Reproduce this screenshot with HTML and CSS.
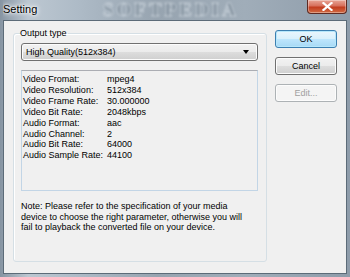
FILE: index.html
```html
<!DOCTYPE html>
<html lang="en">
<head>
  <meta charset="UTF-8" />
  <title>Setting</title>
  <link rel="stylesheet" href="styles.css">
</head>
<body>
  <div class="window">
    <div class="titlebar">
      <span class="watermark">SOFTPEDIA</span>
      <span class="title">Setting</span>
      <button class="close" title="Close">
        <svg width="11" height="9" viewBox="0 0 11 9">
          <path d="M1.5 1 L9.5 8 M9.5 1 L1.5 8" stroke="#fff" stroke-width="2.2" stroke-linecap="square"/>
        </svg>
      </button>
    </div>

    <div class="client">
      <fieldset class="group">
        <legend>Output type</legend>
        <div class="combo">
          <span>High Quality(512x384)</span>
          <span class="arrow"></span>
        </div>
        <div class="info">
          <div class="row"><span class="key">Video Fromat:</span><span>mpeg4</span></div>
          <div class="row"><span class="key">Video Resolution:</span><span>512x384</span></div>
          <div class="row"><span class="key">Video Frame Rate:</span><span>30.000000</span></div>
          <div class="row"><span class="key">Video Bit Rate:</span><span>2048kbps</span></div>
          <div class="row"><span class="key">Audio Format:</span><span>aac</span></div>
          <div class="row"><span class="key">Audio Channel:</span><span>2</span></div>
          <div class="row"><span class="key">Audio Bit Rate:</span><span>64000</span></div>
          <div class="row"><span class="key">Audio Sample Rate:</span><span>44100</span></div>
        </div>
        <p class="note">Note: Please refer to the specification of your media device to choose the right parameter, otherwise you will fail to playback the converted file on your device.</p>
      </fieldset>

      <div class="buttons">
        <button class="btn default">OK</button>
        <button class="btn">Cancel</button>
        <button class="btn" disabled>Edit...</button>
      </div>
    </div>
  </div>
</body>
</html>
```

FILE: styles.css
```css
body {
  margin: 0;
  width: 350px;
  height: 277px;
  overflow: hidden;
  font-family: "Liberation Sans", Arial, sans-serif;
  font-size: 9px;
  color: #000;
  background: #5d7590;
}

.window {
  height: 277px;
  padding: 0 3px 3px 3px;
  box-sizing: border-box;
  background: linear-gradient(90deg, #8694a2 0%, #bcc7d1 8%, #aebbc7 22%, #97a4b0 45%, #a0adb9 70%, #8e9caa 100%);
  display: flex;
  flex-direction: column;
}

.titlebar {
  height: 20px;
  display: flex;
  align-items: flex-start;
  position: relative;
  overflow: hidden;
}

.watermark {
  position: absolute;
  left: 100px;
  top: 0;
  line-height: 20px;
  font-family: "Liberation Serif", serif;
  font-weight: bold;
  font-size: 19px;
  letter-spacing: 3px;
  color: #4f6070;
  opacity: 0.5;
  filter: blur(1.2px);
  -webkit-text-stroke: 1px #e4ebf1;
}

.title {
  position: relative;
  margin-top: 3px;
  font-size: 11px;
  color: #000;
  text-shadow: 0 0 6px #fff, 0 0 4px #fff, 0 0 2px #fff;
}

.close {
  position: relative;
  margin-left: auto;
  width: 40px;
  height: 14px;
  padding: 0;
  border: 1px solid #5e2a22;
  border-top: none;
  border-radius: 0 0 4px 4px;
  background: linear-gradient(#e8a596 0%, #d7705c 45%, #c23c1f 55%, #d06b43 100%);
  box-shadow: inset 0 0 0 1px rgba(255, 255, 255, 0.35);
  display: flex;
  align-items: center;
  justify-content: center;
}

.client {
  flex: 1;
  background: #f0f0f0;
  border: 1px solid #5c6b78;
  display: flex;
  align-items: flex-start;
}

.group {
  margin: 7px 0 0 9px;
  padding: 4px 8px 0 7px;
  width: 254px;
  height: 234px;
  box-sizing: border-box;
  border: 1px solid #d5dfe5;
  border-radius: 3px;
  box-shadow: inset 1px 1px 0 #fff;
  min-width: 0;
}

.group legend {
  padding: 0 1px 0 0;
  margin-left: -1px;
  font-size: 9px;
  line-height: 11px;
}

.combo {
  height: 18px;
  box-sizing: border-box;
  border: 1px solid #707070;
  border-radius: 3px;
  background: linear-gradient(#f2f2f2 0%, #ebebeb 50%, #dddddd 51%, #cfcfcf 100%);
  box-shadow: inset 0 0 0 1px #fcfcfc;
  display: flex;
  align-items: center;
  padding: 0 8px 0 4px;
}

.combo .arrow {
  margin-left: auto;
  width: 0;
  height: 0;
  border-left: 3.5px solid transparent;
  border-right: 3.5px solid transparent;
  border-top: 4px solid #000;
}

.info {
  margin-top: 9px;
  height: 121px;
  box-sizing: border-box;
  border: 1px solid #c2d5e6;
  border-top-color: #abadb3;
  background: #f0f0f0;
  padding: 3px 1px;
}

.row {
  display: flex;
  line-height: 10.9px;
}

.row .key {
  width: 84px;
}

.note {
  margin: 10px 0 0 0;
  line-height: 10.6px;
  width: 228px;
}

.buttons {
  margin: 9px 0 0 8px;
  width: 62px;
  display: flex;
  flex-direction: column;
  gap: 9px;
}

.btn {
  height: 18px;
  padding: 0;
  font-family: "Liberation Sans", Arial, sans-serif;
  font-size: 9px;
  color: #000;
  border: 1px solid #707070;
  border-radius: 3px;
  background: linear-gradient(#f2f2f2 0%, #ebebeb 50%, #dddddd 51%, #cfcfcf 100%);
  box-shadow: inset 0 0 0 1px #fcfcfc;
}

.btn.default {
  border-color: #3c7fb1;
  background: linear-gradient(#eaf6fd 0%, #d9f0fc 50%, #bee6fd 51%, #a7d9f5 100%);
  box-shadow: inset 0 0 0 1px #b7e7fb;
}

.btn:disabled {
  color: #a0a0a0;
  border-color: #adb2b5;
  background: #f4f4f4;
  box-shadow: inset 0 0 0 1px #fcfcfc;
}
```
